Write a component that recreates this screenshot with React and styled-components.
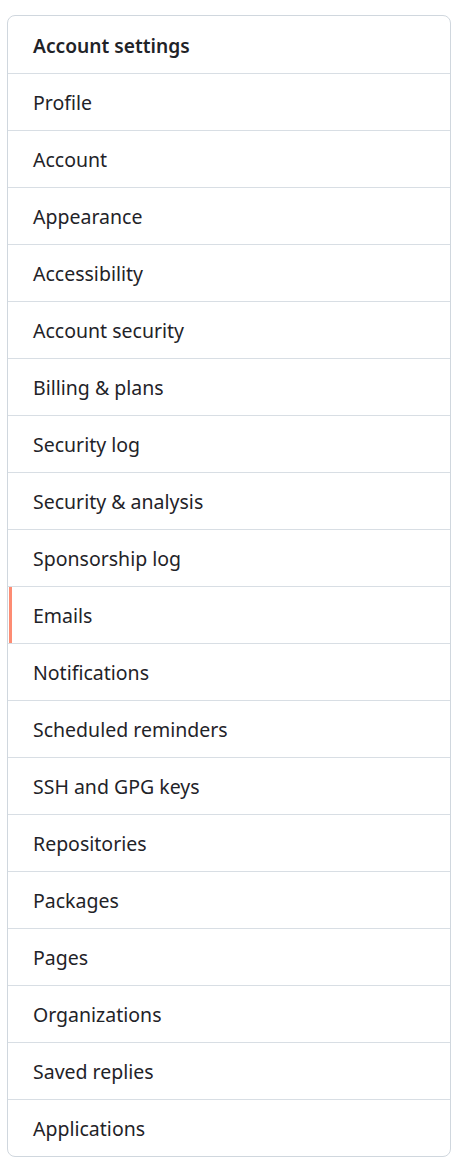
import React from "react";
import styled, { createGlobalStyle } from "styled-components";

const Global = createGlobalStyle`
  html, body { margin: 0; padding: 0; background: #ffffff; }
  body { font-family: "Segoe UI", "Noto Sans", "Open Sans", sans-serif; }
`;

const Page = styled.div`
  padding: 15px 9px 5px 7px;
`;

const Menu = styled.nav`
  border: 1px solid #d0d7de;
  border-radius: 8px;
  overflow: hidden;
  background: #ffffff;
`;

const Heading = styled.h3`
  margin: 0;
  height: 57px;
  display: flex;
  align-items: center;
  padding: 1px 25px 0;
  box-sizing: border-box;
  font-size: 19.2px;
  font-weight: 600;
  color: #1f2328;
`;

const Item = styled.a`
  position: relative;
  display: flex;
  align-items: center;
  box-sizing: border-box;
  height: 57px;
  padding: 1px 25px 0;
  border-top: 1px solid #d8dee4;
  font-size: 19.5px;
  color: #1f2328;
  text-decoration: none;
  cursor: pointer;

  &::before {
    content: "";
    display: ${(p) => (p.$selected ? "block" : "none")};
    position: absolute;
    left: 1px;
    top: 0;
    bottom: 0;
    width: 3px;
    background: #fd8c73;
  }
`;

const items = [
  "Profile",
  "Account",
  "Appearance",
  "Accessibility",
  "Account security",
  "Billing & plans",
  "Security log",
  "Security & analysis",
  "Sponsorship log",
  "Emails",
  "Notifications",
  "Scheduled reminders",
  "SSH and GPG keys",
  "Repositories",
  "Packages",
  "Pages",
  "Organizations",
  "Saved replies",
  "Applications",
];

export default function App() {
  return (
    <Page>
      <Global />
      <Menu>
        <Heading>Account settings</Heading>
        {items.map((label) => (
          <Item key={label} $selected={label === "Emails"}>
            {label}
          </Item>
        ))}
      </Menu>
    </Page>
  );
}
